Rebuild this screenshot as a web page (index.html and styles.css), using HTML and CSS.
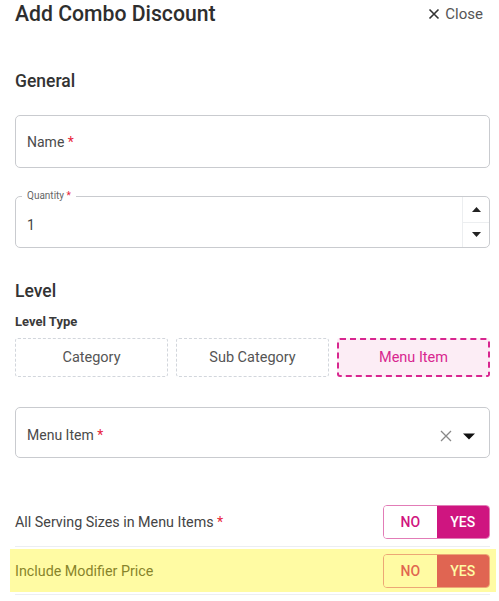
FILE: index.html
```html
<!DOCTYPE html>
<html>
<head>
<meta charset="utf-8">
<link rel="stylesheet" href="styles.css">
</head>
<body>
<div class="panel">
  <div class="header">
    <h1 class="title">Add Combo Discount</h1>
    <div class="close">
      <svg width="12" height="12" viewBox="0 0 12 12"><path d="M1.5 1.5 L10.5 10.5 M10.5 1.5 L1.5 10.5" stroke="#333" stroke-width="1.6" fill="none"/></svg>
      <span>Close</span>
    </div>
  </div>

  <h2 class="section">General</h2>

  <div class="field name-field">
    <span class="label">Name <span class="req">*</span></span>
  </div>

  <div class="field qty-field">
    <span class="legend">Quantity <span class="req">*</span></span>
    <span class="value">1</span>
    <div class="spinner">
      <div class="spin"><svg width="9" height="5" viewBox="0 0 9 5"><path d="M0 5 L4.5 0 L9 5 Z" fill="#222"/></svg></div>
      <div class="spin"><svg width="9" height="5" viewBox="0 0 9 5"><path d="M0 0 L4.5 5 L9 0 Z" fill="#222"/></svg></div>
    </div>
  </div>

  <h2 class="section level">Level</h2>
  <div class="subhead">Level Type</div>
  <div class="options">
    <div class="opt">Category</div>
    <div class="opt">Sub Category</div>
    <div class="opt active">Menu Item</div>
  </div>

  <div class="field select-field">
    <span class="label">Menu Item <span class="req">*</span></span>
    <div class="select-icons">
      <svg width="12" height="12" viewBox="0 0 12 12"><path d="M1 1 L11 11 M11 1 L1 11" stroke="#888" stroke-width="1.3" fill="none"/></svg>
      <svg width="12" height="7" viewBox="0 0 12 7"><path d="M0 0.5 L6 6.5 L12 0.5 Z" fill="#111"/></svg>
    </div>
  </div>

  <div class="row first">
    <span class="row-label">All Serving Sizes in Menu Items <span class="req">*</span></span>
    <div class="toggle">
      <span class="t-no">NO</span>
      <span class="t-yes">YES</span>
    </div>
  </div>
  <div class="row second">
    <span class="row-label">Include Modifier Price</span>
    <div class="toggle">
      <span class="t-no">NO</span>
      <span class="t-yes">YES</span>
    </div>
    <div class="highlight"></div>
  </div>
</div>
</body>
</html>
```

FILE: styles.css
```css
* { box-sizing: border-box; }
html, body { margin: 0; padding: 0; background: #fff; }
body {
  font-family: Roboto, "Noto Sans", "Liberation Sans", sans-serif;
  color: #333;
  width: 499px;
  height: 601px;
  overflow: hidden;
}
.panel {
  padding: 0 9px 0 15px;
}
.header {
  display: flex;
  justify-content: space-between;
  align-items: center;
  height: 26px;
}
.title {
  margin: 0;
  font-size: 21.2px;
  font-weight: 500;
  color: #2e2e2e;
}
.close {
  display: flex;
  align-items: center;
  gap: 5px;
  font-size: 15px;
  color: #555;
  margin-right: 7px;
  margin-top: 1px;
}
.section {
  margin: 45px 0 0;
  font-size: 17.5px;
  font-weight: 500;
  color: #333;
  line-height: 20px;
}
.field {
  position: relative;
  border: 1.5px solid #c9cbcf;
  border-radius: 5px;
  display: flex;
  align-items: center;
}
.name-field {
  margin-top: 24px;
  height: 53px;
  padding-left: 11px;
}
.label {
  font-size: 14px;
  color: #4a4a4a;
}
.req { color: #e8243c; }
.qty-field {
  margin-top: 28px;
  height: 52px;
  padding-left: 11px;
}
.legend {
  position: absolute;
  top: -7px;
  left: 6px;
  padding: 0 5px;
  background: #fff;
  font-size: 10px;
  color: #666;
  line-height: 12px;
}
.value {
  font-size: 14px;
  color: #444;
  margin-top: 6px;
}
.spinner {
  margin-left: auto;
  width: 27px;
  height: 100%;
  border-left: 1px solid #eceef0;
  display: flex;
  flex-direction: column;
}
.spin {
  flex: 1;
  display: flex;
  align-items: center;
  justify-content: center;
}
.spin + .spin { border-top: 1px solid #eceef0; }
.level { margin-top: 33px; }
.subhead {
  margin-top: 12px;
  font-size: 13px;
  font-weight: 700;
  color: #3a3a3a;
  line-height: 17px;
}
.options {
  margin-top: 8px;
  display: grid;
  grid-template-columns: 1fr 1fr 1fr;
  gap: 8px;
}
.opt {
  height: 39px;
  border: 1px dashed #d2d6dc;
  border-radius: 3px;
  display: flex;
  align-items: center;
  justify-content: center;
  font-size: 14.5px;
  color: #555;
}
.opt.active {
  border: 2px dashed #d8268f;
  background: #fcedf5;
  color: #d8268f;
}
.select-field {
  margin-top: 30px;
  height: 51px;
  padding-left: 11px;
  padding-top: 5px;
}
.select-icons {
  margin-left: auto;
  margin-right: 14px;
  display: flex;
  align-items: center;
  gap: 11px;
  margin-top: 2px;
}
.row {
  position: relative;
  display: flex;
  align-items: center;
  justify-content: space-between;
  border-bottom: 1.5px solid #eceef2;
}
.row.first {
  margin-top: 46px;
  height: 43px;
  padding-bottom: 6px;
}
.row.second {
  height: 48px;
}
.row-label {
  font-size: 14.3px;
  color: #444;
}
.toggle {
  display: flex;
  width: 107px;
  height: 34px;
  border: 1.5px solid #e27cb7;
  border-radius: 4px;
  overflow: hidden;
  font-size: 14px;
  font-weight: 500;
}
.t-no, .t-yes {
  flex: 1;
  display: flex;
  align-items: center;
  justify-content: center;
}
.t-no { color: #d0157f; background: #fff; }
.t-yes { color: #fff; background: #cf1580; }
.highlight {
  position: absolute;
  left: -5px;
  right: -6px;
  top: 2px;
  bottom: 2px;
  background: rgba(255, 245, 0, 0.36);
  pointer-events: none;
}
```
